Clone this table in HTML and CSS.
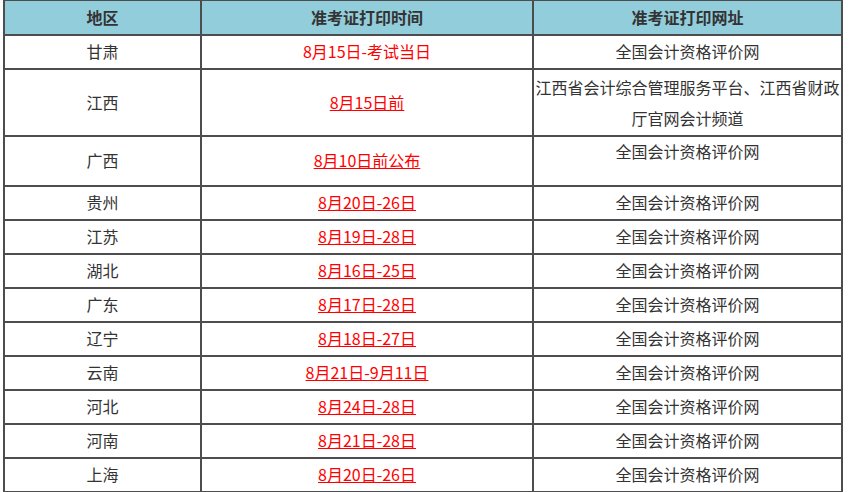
FILE: index.html
```html
<!DOCTYPE html>
<html lang="zh-CN">
<head>
<meta charset="utf-8">
<title>准考证打印时间</title>
<link rel="stylesheet" href="styles.css">
</head>
<body>
<table class="exam-table">
  <colgroup>
    <col class="c-region">
    <col class="c-time">
    <col class="c-site">
  </colgroup>
  <thead>
    <tr class="row-head">
      <th>地区</th>
      <th>准考证打印时间</th>
      <th>准考证打印网址</th>
    </tr>
  </thead>
  <tbody>
    <tr class="row-a"><td>甘肃</td><td><span class="red">8月15日-考试当日</span></td><td>全国会计资格评价网</td></tr>
    <tr class="row-jx"><td>江西</td><td><a class="red link">8月15日前</a></td><td class="multi">江西省会计综合管理服务平台、江西省财政厅官网会计频道</td></tr>
    <tr class="row-gx"><td>广西</td><td><a class="red link">8月10日前公布</a></td><td class="top">全国会计资格评价网</td></tr>
    <tr class="row"><td>贵州</td><td><a class="red link">8月20日-26日</a></td><td>全国会计资格评价网</td></tr>
    <tr class="row"><td>江苏</td><td><a class="red link">8月19日-28日</a></td><td>全国会计资格评价网</td></tr>
    <tr class="row"><td>湖北</td><td><a class="red link">8月16日-25日</a></td><td>全国会计资格评价网</td></tr>
    <tr class="row"><td>广东</td><td><a class="red link">8月17日-28日</a></td><td>全国会计资格评价网</td></tr>
    <tr class="row"><td>辽宁</td><td><a class="red link">8月18日-27日</a></td><td>全国会计资格评价网</td></tr>
    <tr class="row"><td>云南</td><td><a class="red link">8月21日-9月11日</a></td><td>全国会计资格评价网</td></tr>
    <tr class="row"><td>河北</td><td><a class="red link">8月24日-28日</a></td><td>全国会计资格评价网</td></tr>
    <tr class="row"><td>河南</td><td><a class="red link">8月21日-28日</a></td><td>全国会计资格评价网</td></tr>
    <tr class="row"><td>上海</td><td><a class="red link">8月20日-26日</a></td><td>全国会计资格评价网</td></tr>
  </tbody>
</table>
</body>
</html>
```

FILE: styles.css
```css
html, body {
  margin: 0;
  padding: 0;
  background: #ffffff;
}
body {
  font-family: "Noto Sans CJK SC", "Noto Sans", "Liberation Sans", sans-serif;
  font-size: 16px;
  color: #333333;
}
.exam-table {
  margin: -1px 0 0 3px;
  width: 840px;
  table-layout: fixed;
  border-collapse: collapse;
}
.c-region { width: 197px; }
.c-time { width: 332px; }
.c-site { width: 309px; }
.exam-table th,
.exam-table td {
  border: 2px solid #4d4d4d;
  padding: 0 0 2px 0;
  text-align: center;
  vertical-align: middle;
  line-height: 22px;
  white-space: normal;
}
.exam-table th {
  background: #92cddc;
  font-weight: bold;
  color: #333333;
}
.row-head { height: 35px; }
.row-a { height: 34px; }
.row-jx { height: 67px; }
.row-gx { height: 50px; }
.row { height: 34px; }
.exam-table td.multi {
  line-height: 31px;
  padding: 0;
}
.exam-table td.top {
  vertical-align: top;
  padding: 3px 0 0 0;
}
.red { color: #ff0000; }
.link { text-decoration: underline; }
```
